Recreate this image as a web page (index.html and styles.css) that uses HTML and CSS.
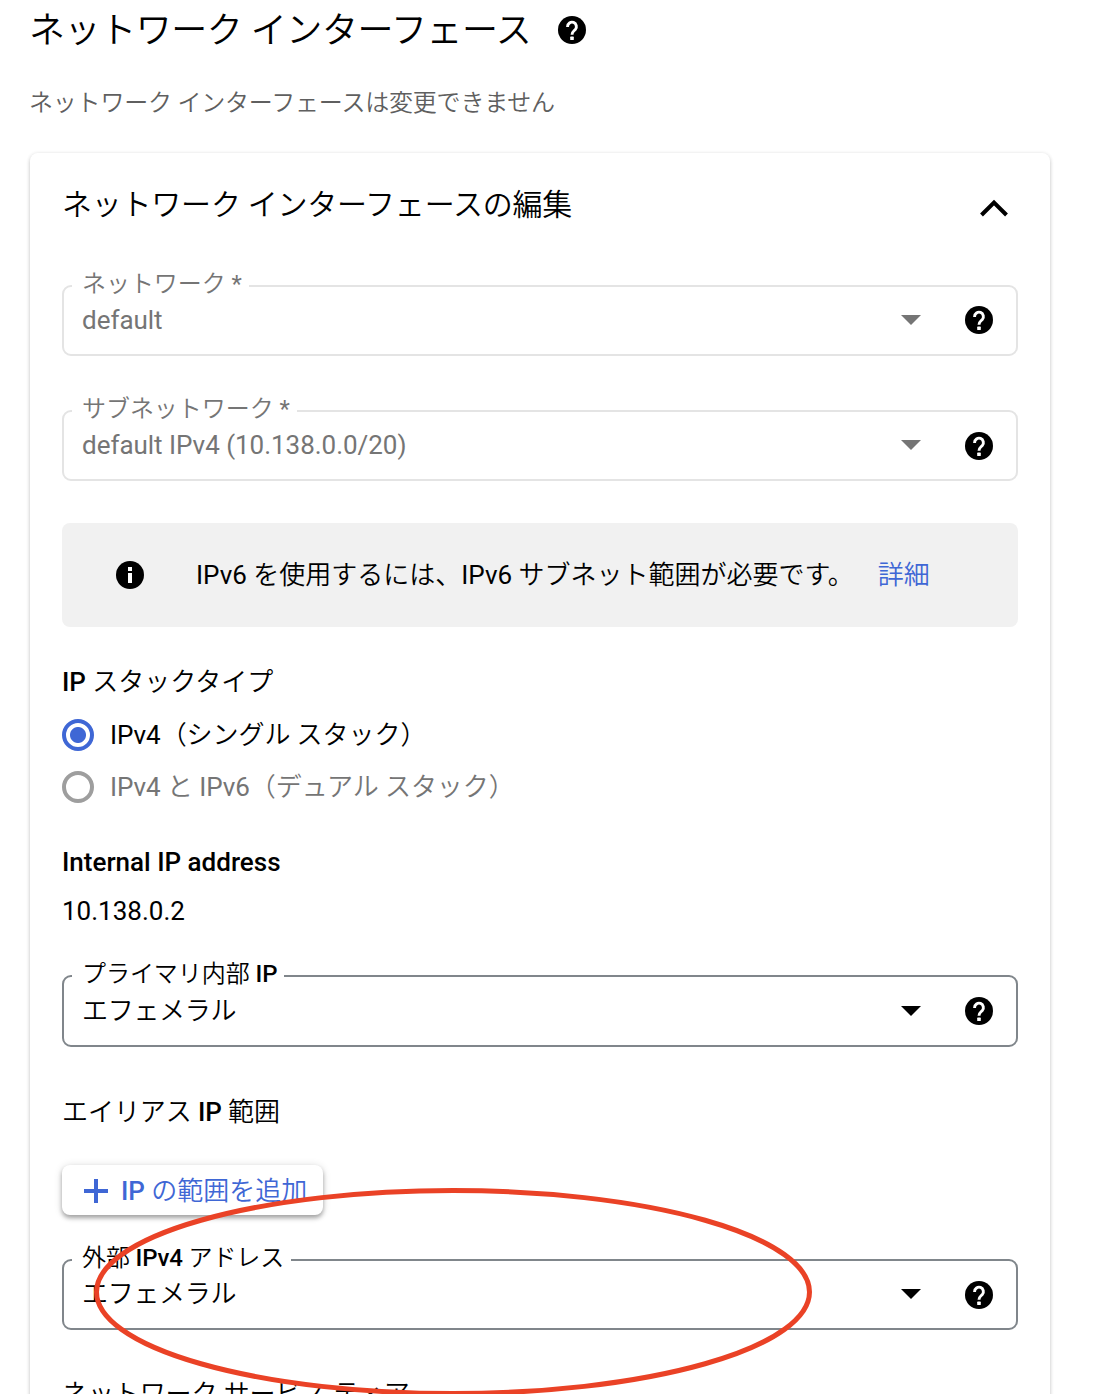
FILE: index.html
```html
<!DOCTYPE html>
<html lang="ja">
<head>
<meta charset="utf-8">
<title>ネットワーク インターフェース</title>
<link rel="stylesheet" href="styles.css">
</head>
<body>
<svg class="defs" aria-hidden="true">
  <symbol id="help" viewBox="0 0 28 28"><circle cx="14" cy="14" r="14"/><path d="M9.600 11.100v-.5a4.400 4.400 0 1 1 7.700 2.900c-1.500 1.600-3.300 2.300-3.300 5.300" fill="none" stroke="#fff" stroke-width="2.900"/><rect x="12.200" y="20.600" width="3.600" height="3.400" rx=".6" fill="#fff"/></symbol>
</svg>
<main class="page">
  <header class="page-head">
    <h1 class="page-title">ネットワーク インターフェース</h1>
    <svg class="help"><use href="#help"/></svg>
  </header>
  <p class="subtitle">ネットワーク インターフェースは変更できません</p>

  <section class="card">
    <div class="card-head">
      <h2 class="card-title">ネットワーク インターフェースの編集</h2>
      <svg class="chevron" viewBox="0 0 28 18"><path d="M1.500 16 14 3.500 26.500 16"/></svg>
    </div>

    <div class="field disabled network">
      <label class="field-label">ネットワーク <span class="latin">*</span></label>
      <span class="value latin">default</span>
      <i class="arrow"></i>
      <svg class="help"><use href="#help"/></svg>
    </div>
    <div class="field disabled subnet">
      <label class="field-label">サブネットワーク <span class="latin">*</span></label>
      <span class="value latin">default IPv4 (10.138.0.0/20)</span>
      <i class="arrow"></i>
      <svg class="help"><use href="#help"/></svg>
    </div>

    <div class="notice">
      <svg class="info" viewBox="0 0 28 28"><circle cx="14" cy="14" r="14"/><path d="M12 6h4v4h-4zM12 12h4v10h-4z"/></svg>
      <p class="notice-text"><span class="latin">IPv6</span> を使用するには、<span class="latin">IPv6</span> サブネット範囲が必要です。</p>
      <a class="link">詳細</a>
    </div>

    <h3 class="heading"><span class="strong">IP</span> スタックタイプ</h3>
    <label class="option"><i class="radio on"></i><span><span class="latin">IPv4</span>（シングル スタック）</span></label>
    <label class="option muted"><i class="radio"></i><span><span class="latin">IPv4</span> と <span class="latin">IPv6</span>（デュアル スタック）</span></label>

    <h3 class="heading address-heading"><span class="strong">Internal IP address</span></h3>
    <p class="address latin">10.138.0.2</p>

    <div class="field primary">
      <label class="field-label">プライマリ内部 <span class="strong">IP</span></label>
      <span class="value kana">エフェメラル</span>
      <i class="arrow"></i>
      <svg class="help"><use href="#help"/></svg>
    </div>

    <h3 class="heading alias-heading">エイリアス <span class="strong">IP</span> 範囲</h3>
    <button class="add" type="button">
      <svg class="plus" viewBox="0 0 24 24"><path d="M12 0v24M0 12h24"/></svg>
      <span><span class="strong">IP</span> の範囲を追加</span>
    </button>

    <div class="field external">
      <label class="field-label">外部 <span class="strong">IPv4</span> アドレス</label>
      <span class="value kana">エフェメラル</span>
      <i class="arrow"></i>
      <svg class="help"><use href="#help"/></svg>
    </div>

    <h3 class="heading tier-heading">ネットワーク サービス ティア</h3>
  </section>
  <svg class="marker" viewBox="0 0 720 210"><ellipse cx="360" cy="105" rx="356.500" ry="101.500"/></svg>
</main>
</body>
</html>
```
FILE: styles.css
```css
* { box-sizing: border-box; }
body { margin: 0; background: #fff; }
.defs { display: none; }

.page {
  position: relative;
  height: 1394px;
  overflow: hidden;
  padding: 10px 64px 0 30px;
  font: 350 26px/40px Roboto, "Noto Sans CJK JP", sans-serif;
  color: #000;
}
h1, h2, h3, p { margin: 0; font-weight: 350; }
.latin { font-weight: 400; }
.strong { font-weight: 500; }

.page-head { display: flex; align-items: center; gap: 27px; height: 40px; }
.page-title { margin-left: -1px; padding-top: 2px; font-size: 36px; letter-spacing: -.43px; white-space: nowrap; }
.help { flex: none; width: 28px; height: 28px; fill: #000; }
.subtitle { margin: 33px 0 0 -1px; font-size: 24px; letter-spacing: -.2px; color: #5f5f5f; }

.card {
  height: 1300px;
  margin-top: 30px;
  padding: 32px 32px 0;
  border-radius: 8px;
  box-shadow: 0 2px 4px rgba(0, 0, 0, .2), 0 0 4px rgba(0, 0, 0, .06);
}
.card-head { display: flex; justify-content: space-between; align-items: center; height: 40px; padding-right: 10px; }
.card-title { font-size: 30px; letter-spacing: -.22px; }
.chevron { width: 28px; height: 18px; margin-top: 5px; fill: none; stroke: #000; stroke-width: 4; }

.field {
  position: relative;
  display: flex;
  align-items: center;
  height: 71px;
  padding: 0 23px 0 18px;
  border: 2px solid #80868b;
  border-radius: 9px;
}
.field-label {
  position: absolute;
  top: -23px;
  left: 8px;
  height: 36px;
  padding: 0 7px 0 10px;
  background: #fff;
  font-size: 24px;
  letter-spacing: -.05px;
  white-space: nowrap;
}
.value { flex: 1; margin-bottom: 1px; letter-spacing: -.03px; }
.kana { letter-spacing: -.3px; }
.arrow {
  width: 20px;
  height: 10px;
  margin: 0 44px 1px 0;
  background: #000;
  clip-path: polygon(0 0, 100% 0, 50% 100%);
}
.field .help { margin-top: 1px; }
.disabled { border-color: #e4e4e4; color: #757575; }
.disabled .arrow { background: #757575; }
.network { margin-top: 60px; }
.network .help { margin: 0 0 1px; }
.subnet { margin-top: 54px; }

.notice {
  display: flex;
  align-items: center;
  height: 104px;
  margin-top: 42px;
  padding-left: 54px;
  border-radius: 8px;
  background: #f1f1f1;
}
.info { width: 28px; height: 28px; margin-right: 52px; }
.info path { fill: #fff; }
.notice-text { white-space: nowrap; }
.link { margin-left: 24px; color: #3f67d5; }

.heading { margin-top: 35px; font-size: 26px; }
.option { display: flex; align-items: center; gap: 16px; height: 52px; letter-spacing: -.06px; }
.heading + .option { margin-top: 7px; }
.muted { color: #757575; }
.radio { width: 32px; height: 32px; border: 4px solid #9e9e9e; border-radius: 50%; }
.on { border-color: #3f67d5; background: radial-gradient(circle, #3f67d5 7.5px, transparent 8.5px); }
.address-heading { margin-top: 29px; }
.address { margin-top: 9px; }
.primary { height: 72px; margin-top: 44px; }
.primary .value, .primary .arrow { margin-bottom: 0; }
.primary .help { margin-top: 0; }
.alias-heading { margin-top: 45px; letter-spacing: -.06px; }

.add {
  display: flex;
  align-items: center;
  gap: 13px;
  width: 261px;
  height: 50px;
  margin-top: 33px;
  padding: 2px 0 0 22px;
  border: 0;
  border-radius: 8px;
  background: #fff;
  box-shadow: 0 3px 4px rgba(0, 0, 0, .3), 0 1px 8px rgba(0, 0, 0, .14);
  color: #3f67d5;
  font: inherit;
  white-space: nowrap;
}
.plus { width: 24px; height: 24px; stroke: #3f67d5; stroke-width: 4; }
.external { margin-top: 44px; }
.external .field-label { letter-spacing: -.12px; }
.tier-heading { margin-top: 44px; letter-spacing: -.1px; }

/* Hand-drawn highlight lying over the form */
.marker {
  position: absolute;
  left: 93px;
  top: 1187px;
  width: 720px;
  height: 210px;
  fill: none;
  stroke: #ea4226;
  stroke-width: 5;
}
```
